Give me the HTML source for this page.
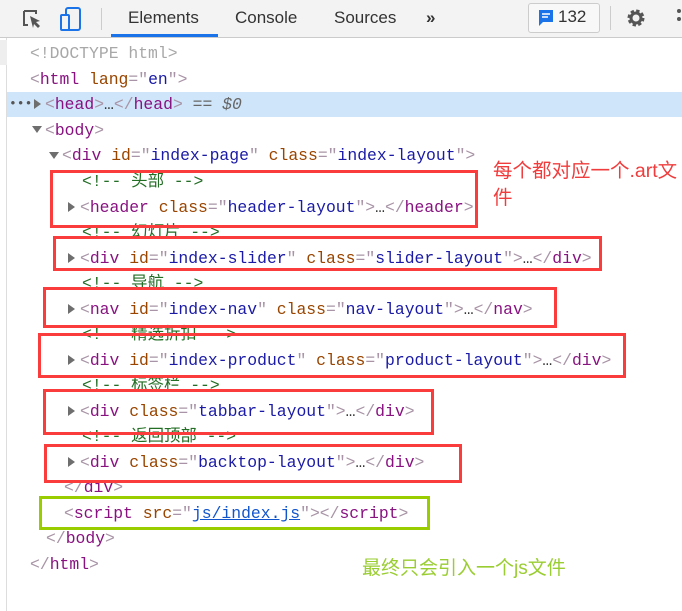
<!DOCTYPE html>
<html><head><meta charset="utf-8"><style>
body{margin:0;width:682px;height:611px;background:#fff;position:relative;overflow:hidden;font-family:"Liberation Sans","Noto Sans CJK SC",sans-serif}
.tb{position:absolute;left:0;top:0;width:682px;height:37px;background:#f3f3f3;border-bottom:1px solid #cbcbcb}
.tab{position:absolute;top:8px;font-size:17px;color:#333}
.l{position:absolute;font-family:"Liberation Mono","Noto Sans CJK SC",monospace;font-size:16.4px;white-space:pre;line-height:20px;color:#881280}
.b{color:#a894a6}.n{color:#994500}.v{color:#1a1aa6}.c{color:#236e25}
.t{position:absolute;width:0;height:0;border-left:7px solid #6e6e6e;border-top:5px solid transparent;border-bottom:5px solid transparent}
.td{position:absolute;width:0;height:0;border-top:7px solid #6e6e6e;border-left:5px solid transparent;border-right:5px solid transparent}
.r{position:absolute;border:3px solid #fa3c3c;box-sizing:border-box}
</style></head><body>
<div class="tb">
<svg style="position:absolute;left:20px;top:7px" width="24" height="24" viewBox="0 0 24 24"><path d="M4 4h12v3M4 4v14h4" fill="none" stroke="#555" stroke-width="2"/><path d="M10 9l10 5-4 1 4 4-2 2-4-4-1 4z" fill="#555"/></svg>
<svg style="position:absolute;left:58px;top:6px" width="26" height="26" viewBox="0 0 26 26"><rect x="8" y="2" width="14" height="22" rx="2" fill="none" stroke="#1a73e8" stroke-width="2"/><rect x="3" y="9" width="8" height="15" rx="1" fill="#f3f3f3" stroke="#1a73e8" stroke-width="2"/></svg>
<div style="position:absolute;left:101px;top:8px;width:1px;height:22px;background:#ccc"></div>
<div class="tab" style="left:128px">Elements</div>
<div style="position:absolute;left:111px;top:34px;width:107px;height:3px;background:#1a73e8"></div>
<div class="tab" style="left:235px">Console</div>
<div class="tab" style="left:334px">Sources</div>
<div class="tab" style="left:426px;font-weight:bold">»</div>
<div style="position:absolute;left:528px;top:3px;width:70px;height:28px;border:1px solid #ccc;border-radius:3px;background:#f8f8f8"></div>
<svg style="position:absolute;left:539px;top:10px" width="14" height="16" viewBox="0 0 14 16"><path d="M0 0h14v12H4l-4 4z" fill="#1a73e8"/><path d="M3 4h8M3 7h6" stroke="#fff" stroke-width="1.5"/></svg>
<div class="tab" style="left:558px;top:7px;color:#333">132</div>
<div style="position:absolute;left:610px;top:6px;width:1px;height:24px;background:#ccc"></div>
<svg style="position:absolute;left:626px;top:8px" width="20" height="20" viewBox="0 0 20 20"><circle cx="10" cy="10" r="6.5" fill="none" stroke="#555" stroke-width="4" stroke-dasharray="3 2.1"/><circle cx="10" cy="10" r="5" fill="none" stroke="#555" stroke-width="3"/></svg>
<div style="position:absolute;left:677px;top:9px;width:4px;height:4px;border-radius:2px;background:#555;box-shadow:0 8px 0 #555"></div>
</div>
<div style="position:absolute;left:6px;top:38px;width:1px;height:573px;background:#ddd"></div>
<div style="position:absolute;left:0;top:40px;width:7px;height:25px;background:#eee"></div>
<div style="position:absolute;left:7px;top:92px;width:675px;height:25px;background:#cfe5fa"></div>

<div class="l" style="left:30px;top:44px;color:#a8a8a8">&lt;!DOCTYPE html&gt;</div>
<div class="l" style="left:30px;top:70px"><span class="b">&lt;</span>html <span class="n">lang</span><span class="b">="</span><span class="v">en</span><span class="b">"&gt;</span></div>
<div class="l" style="left:9px;top:94px;color:#555;font-size:13px">•••</div>
<div class="t" style="left:34px;top:99px"></div>
<div class="l" style="left:45px;top:95px"><span class="b">&lt;</span>head<span class="b">&gt;</span><span style="color:#333">…</span><span class="b">&lt;/</span>head<span class="b">&gt;</span> <i style="color:#666">== $0</i></div>
<div class="td" style="left:32px;top:126px"></div>
<div class="l" style="left:45px;top:121px"><span class="b">&lt;</span>body<span class="b">&gt;</span></div>
<div class="td" style="left:49px;top:152px"></div>
<div class="l" style="left:62px;top:146px"><span class="b">&lt;</span>div <span class="n">id</span><span class="b">="</span><span class="v">index-page</span><span class="b">"</span> <span class="n">class</span><span class="b">="</span><span class="v">index-layout</span><span class="b">"&gt;</span></div>
<div class="l c" style="left:82px;top:172px">&lt;!-- 头部 --&gt;</div>
<div class="t" style="left:68px;top:202px"></div>
<div class="l" style="left:80px;top:198px"><span class="b">&lt;</span>header <span class="n">class</span><span class="b">="</span><span class="v">header-layout</span><span class="b">"&gt;</span><span style="color:#333">…</span><span class="b">&lt;/</span>header<span class="b">&gt;</span></div>
<div class="l c" style="left:82px;top:223px">&lt;!-- 幻灯片 --&gt;</div>
<div class="t" style="left:68px;top:253px"></div>
<div class="l" style="left:80px;top:249px"><span class="b">&lt;</span>div <span class="n">id</span><span class="b">="</span><span class="v">index-slider</span><span class="b">"</span> <span class="n">class</span><span class="b">="</span><span class="v">slider-layout</span><span class="b">"&gt;</span><span style="color:#333">…</span><span class="b">&lt;/</span>div<span class="b">&gt;</span></div>
<div class="l c" style="left:82px;top:274px">&lt;!-- 导航 --&gt;</div>
<div class="t" style="left:68px;top:304px"></div>
<div class="l" style="left:80px;top:300px"><span class="b">&lt;</span>nav <span class="n">id</span><span class="b">="</span><span class="v">index-nav</span><span class="b">"</span> <span class="n">class</span><span class="b">="</span><span class="v">nav-layout</span><span class="b">"&gt;</span><span style="color:#333">…</span><span class="b">&lt;/</span>nav<span class="b">&gt;</span></div>
<div class="l c" style="left:82px;top:325px">&lt;!-- 精选折扣 --&gt;</div>
<div class="t" style="left:68px;top:355px"></div>
<div class="l" style="left:80px;top:351px"><span class="b">&lt;</span>div <span class="n">id</span><span class="b">="</span><span class="v">index-product</span><span class="b">"</span> <span class="n">class</span><span class="b">="</span><span class="v">product-layout</span><span class="b">"&gt;</span><span style="color:#333">…</span><span class="b">&lt;/</span>div<span class="b">&gt;</span></div>
<div class="l c" style="left:82px;top:376px">&lt;!-- 标签栏 --&gt;</div>
<div class="t" style="left:68px;top:406px"></div>
<div class="l" style="left:80px;top:402px"><span class="b">&lt;</span>div <span class="n">class</span><span class="b">="</span><span class="v">tabbar-layout</span><span class="b">"&gt;</span><span style="color:#333">…</span><span class="b">&lt;/</span>div<span class="b">&gt;</span></div>
<div class="l c" style="left:82px;top:427px">&lt;!-- 返回顶部 --&gt;</div>
<div class="t" style="left:68px;top:457px"></div>
<div class="l" style="left:80px;top:453px"><span class="b">&lt;</span>div <span class="n">class</span><span class="b">="</span><span class="v">backtop-layout</span><span class="b">"&gt;</span><span style="color:#333">…</span><span class="b">&lt;/</span>div<span class="b">&gt;</span></div>
<div class="l" style="left:64px;top:478px"><span class="b">&lt;/</span>div<span class="b">&gt;</span></div>
<div class="l" style="left:64px;top:504px"><span class="b">&lt;</span>script <span class="n">src</span><span class="b">="</span><span style="color:#1155cc;text-decoration:underline">js/index.js</span><span class="b">"&gt;&lt;/</span>script<span class="b">&gt;</span></div>
<div class="l" style="left:46px;top:529px"><span class="b">&lt;/</span>body<span class="b">&gt;</span></div>
<div class="l" style="left:30px;top:555px"><span class="b">&lt;/</span>html<span class="b">&gt;</span></div>

<div class="r" style="left:50px;top:170px;width:428px;height:58px"></div>
<div class="r" style="left:53px;top:236px;width:549px;height:35px"></div>
<div class="r" style="left:43px;top:287px;width:514px;height:41px"></div>
<div class="r" style="left:38px;top:333px;width:588px;height:45px"></div>
<div class="r" style="left:43px;top:389px;width:391px;height:46px"></div>
<div class="r" style="left:44px;top:444px;width:418px;height:39px"></div>
<div class="r" style="left:39px;top:496px;width:391px;height:34px;border-color:#9acd00"></div>
<div style="position:absolute;left:493px;top:158px;width:189px;font-size:19.5px;line-height:27px;color:#f03c3c;word-break:break-all">每个都对应一个.art文件</div>
<div style="position:absolute;left:362px;top:553px;font-size:19px;color:#9acd32">最终只会引入一个js文件</div>
</body></html>
